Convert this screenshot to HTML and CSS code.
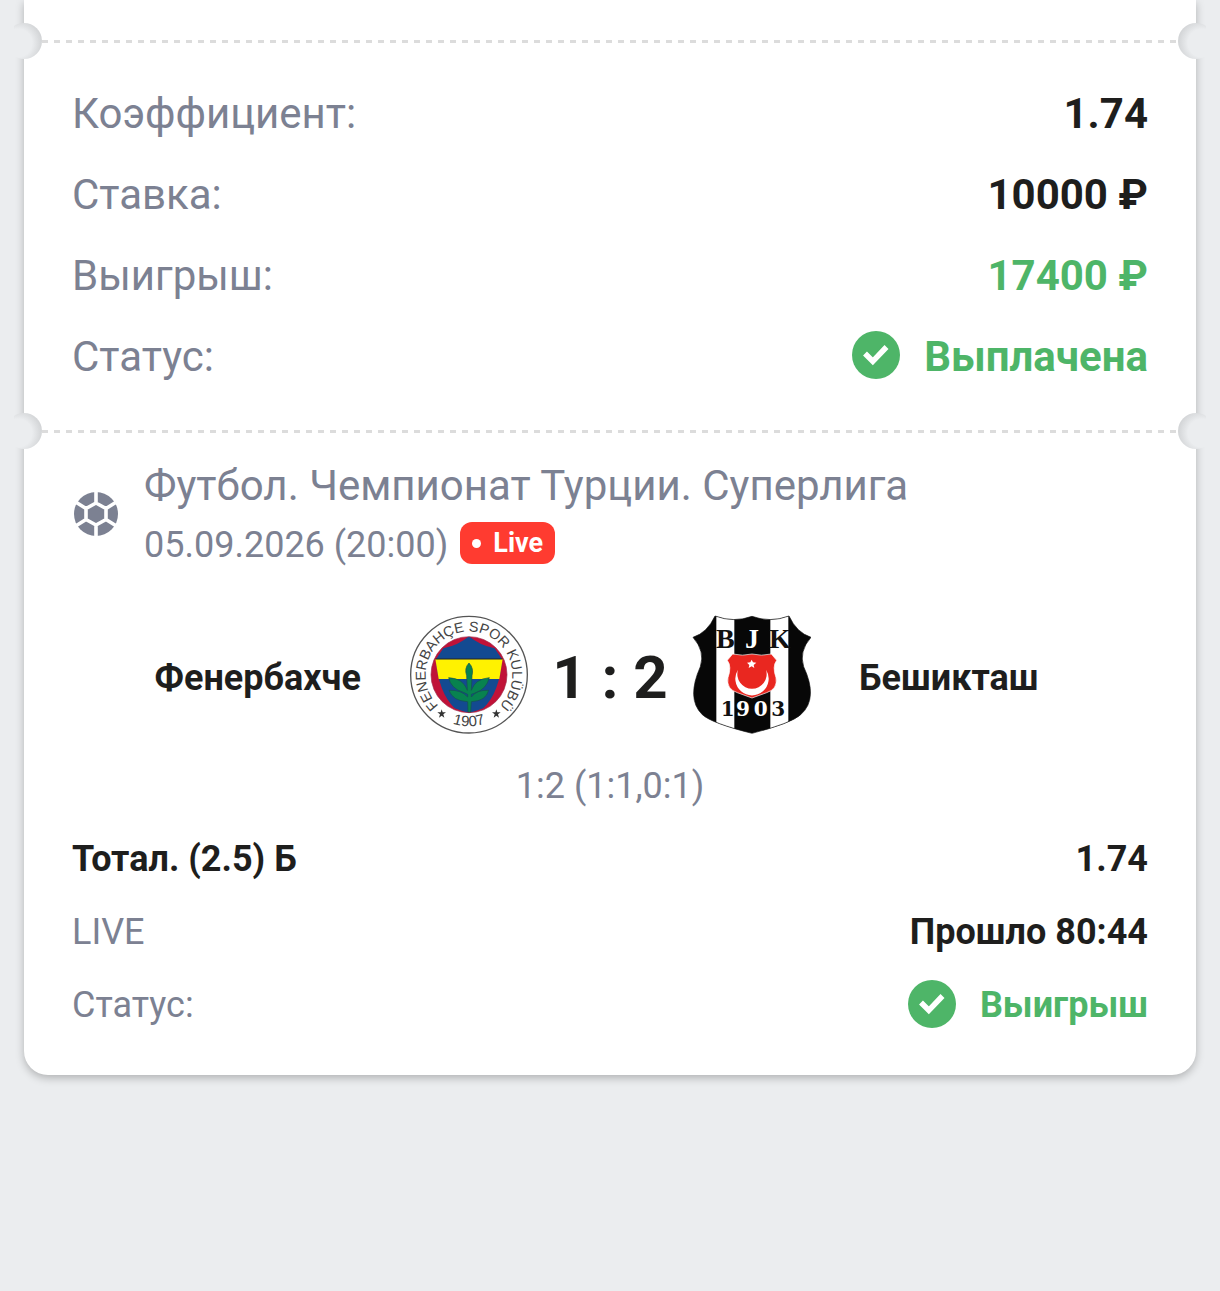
FILE: index.html
```html
<!DOCTYPE html>
<html lang="ru">
<head>
<meta charset="utf-8">
<meta name="viewport" content="width=device-width, initial-scale=1">
<title>Купон</title>
<link rel="stylesheet" href="styles.css">
</head>
<body>
<main class="ticket">
  <div class="divider"></div>
  <dl class="summary">
    <div class="row"><dt>Коэффициент:</dt><dd>1.74</dd></div>
    <div class="row"><dt>Ставка:</dt><dd>10000 ₽</dd></div>
    <div class="row"><dt>Выигрыш:</dt><dd class="win">17400 ₽</dd></div>
    <div class="row"><dt>Статус:</dt>
      <dd class="status win">
        <svg class="check" viewBox="0 0 48 48" aria-hidden="true"><circle cx="24" cy="24" r="24" fill="#4eb568"/><path d="M13 22.500l7.800 7.800L34.500 16" fill="none" stroke="#fff" stroke-width="5.500"/></svg>
        Выплачена
      </dd>
    </div>
  </dl>
  <div class="divider"></div>
  <section class="event">
    <header class="event-head">
      <svg class="ball" viewBox="0 0 48 48" aria-hidden="true">
        <circle cx="24" cy="24" r="22" fill="#7c8192"/>
        <path d="M24 13l10 5.500v11L24 35l-10-5.500v-11zM24 13V0M34 18.500L46 11M34 29.500L46 37M24 35v13M14 29.500L2 37M14 18.500L2 11" fill="none" stroke="#fff" stroke-width="3.600"/>
      </svg>
      <div class="event-info">
        <h1 class="league">Футбол. Чемпионат Турции. Суперлига</h1>
        <p class="when"><time datetime="2026-09-05T20:00">05.09.2026 (20:00)</time><span class="live">Live</span></p>
      </div>
    </header>
    <div class="match">
      <span class="team home">Фенербахче</span>
      <svg class="crest" viewBox="27 30 360 360" role="img" aria-label="Фенербахче">
        <defs>
          <path id="ring" d="M123 309A130 130 0 1 1 291 309"/>
          <path id="ring-low" d="M52 209A155 155 0 0 0 362 209"/>
          <clipPath id="disc"><circle cx="207" cy="209" r="114"/></clipPath>
        </defs>
        <circle cx="207" cy="209" r="175" fill="#fff" stroke="#555" stroke-width="4"/>
        <circle cx="207" cy="209" r="114" fill="#c01238"/>
        <g clip-path="url(#disc)">
          <path d="M207 94Q240 122 284 130L306 162Q300 260 250 310L207 325 164 310Q114 260 108 162L130 130Q174 122 207 94z" fill="#134a91"/>
          <path d="M106 162H308L298 222H116z" fill="#fff200"/>
          <path d="M106 162H308" stroke="#222" stroke-width="3"/>
        </g>
        <path d="M207 174Q222 190 216 212L214 256Q225 222 268 218 260 252 225 264L214 268V276Q230 254 266 256 258 288 214 290L212 322H204L203 290Q158 288 147 256 184 254 203 276V268L190 262Q152 250 146 218 190 220 202 256L200 212Q192 190 207 174z" fill="#08824f" stroke="#174f50" stroke-width="2"/>
        <circle cx="207" cy="209" r="114" fill="none" stroke="#9e2848" stroke-width="2"/>
        <text class="crest-name" fill="#444"><textPath href="#ring" startOffset="50%" text-anchor="middle">FENERBAHÇE SPOR KULÜBÜ</textPath></text>
        <text class="crest-year" fill="#444"><textPath href="#ring-low" startOffset="50%" text-anchor="middle">1907</textPath></text>
        <path d="M125 313l3 9 10 0-8 6 3 10-8-6-8 6 3-10-8-6h10z" fill="#333"/>
        <path d="M289 313l3 9 10 0-8 6 3 10-8-6-8 6 3-10-8-6h10z" fill="#333"/>
      </svg>
      <strong class="score">1 : 2</strong>
      <svg class="crest" viewBox="27 30 360 360" role="img" aria-label="Бешикташ">
        <defs><clipPath id="shield"><path d="M99 33Q156 54 210 34 264 54 321 33 344 83 387 97 350 139 365 185 410 282 356 329 328 355 210 385 90 355 61 329 12 282 55 185 70 139 33 97 76 83 99 33z"/></clipPath></defs>
        <g clip-path="url(#shield)">
          <path d="M20 20H400V400H20z" fill="#070707"/>
          <path d="M103 20H157V400H103zM265 20H319V400H265z" fill="#fff"/>
        </g>
        <path d="M99 33Q156 54 210 34 264 54 321 33 344 83 387 97 350 139 365 185 410 282 356 329 328 355 210 385 90 355 61 329 12 282 55 185 70 139 33 97 76 83 99 33z" fill="none" stroke="#111" stroke-width="2"/>
        <path d="M152 147Q182 154 210 147 238 154 268 147L284 166Q270 184 282 218 288 252 254 263L210 279 166 263Q132 252 138 218 150 184 136 166z" fill="#e92720" stroke="#fff" stroke-width="2"/>
        <path d="M168 194A50 50 0 1 0 252 194A44 44 0 1 1 168 194z" fill="#fff"/>
        <path d="M209 164l4 8 10 1-8 7 2 9-8-5-9 5 2-9-7-7 10-1z" fill="#fff"/>
        <g class="crest-bold" text-anchor="middle">
          <text x="130" y="129" fill="#111">B</text><text x="210" y="129" fill="#fff">J</text><text x="294" y="129" fill="#111">K</text>
        </g>
        <g class="crest-date" text-anchor="middle">
          <text x="137" y="334" fill="#111">1</text><text x="183" y="334" fill="#fff">9</text><text x="236" y="334" fill="#fff">0</text><text x="289" y="334" fill="#111">3</text>
        </g>
      </svg>
      <span class="team away">Бешикташ</span>
    </div>
    <p class="periods">1:2 (1:1,0:1)</p>
    <dl class="bet">
      <div class="row"><dt class="pick">Тотал. (2.5) Б</dt><dd>1.74</dd></div>
      <div class="row"><dt>LIVE</dt><dd>Прошло 80:44</dd></div>
      <div class="row"><dt>Статус:</dt>
        <dd class="status win">
          <svg class="check" viewBox="0 0 48 48" aria-hidden="true"><circle cx="24" cy="24" r="24" fill="#4eb568"/><path d="M13 22.500l7.800 7.800L34.500 16" fill="none" stroke="#fff" stroke-width="5.500"/></svg>
          Выигрыш
        </dd>
      </div>
    </dl>
  </section>
</main>
</body>
</html>
```
FILE: styles.css
```css
* { box-sizing: border-box; }

body {
  margin: 0;
  padding: 0 24px 48px;
  background: #ebedef;
  color: #1e1e1d;
  font-family: Roboto, "Liberation Sans", sans-serif;
}

h1, p, dl, dd { margin: 0; }

.ticket {
  padding-top: 23px;
  background: #fff;
  border-radius: 0 0 24px 24px;
  box-shadow: 0 3px 9px rgba(0, 0, 0, 0.25);
}

/* Perforation: dashed line between two round notches */
.divider {
  position: relative;
  height: 36px;
  background: repeating-linear-gradient(90deg, #dcdcdc 0 6px, transparent 6px 12px) 18px center / calc(100% - 36px) 3px no-repeat;
}

.divider::before,
.divider::after {
  content: "";
  position: absolute;
  top: 0;
  width: 36px;
  height: 36px;
  border-radius: 50%;
}

.divider::before {
  left: -18px;
  background: radial-gradient(circle at 12px 20px, #ebedef 14px, #d0d2d4 25px);
  clip-path: inset(0 0 0 8px);
}

.divider::after {
  right: -18px;
  background: radial-gradient(circle at 24px 20px, #ebedef 14px, #d0d2d4 25px);
  clip-path: inset(0 8px 0 0);
}

.row {
  display: flex;
  justify-content: space-between;
  align-items: center;
}

dt { color: #7c8192; }
dd { font-weight: 700; }

.summary {
  display: flex;
  flex-direction: column;
  gap: 32px;
  padding: 30px 48px 32px;
  font-size: 42px;
  line-height: 49px;
}

.status {
  display: flex;
  align-items: center;
  gap: 24px;
}

.win { color: #4eb568; }

/* The tick is raised slightly so it centres on the capitals */
.check {
  width: 48px;
  height: 48px;
  margin: -6px 0 -2px;
}

.bet .check { margin: -8px 0 -4px; }

.event { padding: 12px 48px 49px; }

.event-head {
  display: flex;
  align-items: center;
  gap: 24px;
}

.ball {
  flex: none;
  width: 48px;
  height: 48px;
}

.event-info { color: #7c8192; }

.league {
  font-size: 42px;
  line-height: 49px;
  font-weight: 400;
}

.when {
  display: flex;
  align-items: flex-end;
  gap: 12px;
  margin-top: 8px;
  font-size: 36px;
  line-height: 42px;
}

.when time { padding-top: 6px; }

.live {
  display: flex;
  align-items: center;
  gap: 12px;
  margin-bottom: 2px;
  padding: 0 12px;
  border-radius: 12px;
  background: #ff3b30;
  color: #fff;
  font-size: 27px;
  font-weight: 700;
}

.live::before {
  content: "";
  width: 9px;
  height: 9px;
  border-radius: 50%;
  background: #fff;
}

.match {
  display: grid;
  grid-template-columns: 1fr 120px 162px 120px 1fr;
  align-items: center;
  margin-top: 49px;
}

.team {
  padding-top: 6px;
  font-size: 36px;
  line-height: 41px;
  font-weight: 700;
}

.home {
  padding-right: 48px;
  text-align: right;
}

.away { padding-left: 48px; }

.crest {
  width: 120px;
  height: 120px;
}

.crest-name { font: 43px "Liberation Sans", sans-serif; }
.crest-year { font: 45px "Liberation Sans", sans-serif; }
.crest-bold { font: bold 84px "Liberation Serif", serif; }
.crest-date { font: bold 60px "DejaVu Serif", serif; }

.score {
  padding-top: 6px;
  font-size: 60px;
  line-height: 70px;
  text-align: center;
}

.periods {
  margin: 31px 0 32px;
  color: #7c8192;
  font-size: 36px;
  line-height: 41px;
  text-align: center;
}

.bet {
  display: flex;
  flex-direction: column;
  gap: 32px;
  font-size: 36px;
  line-height: 41px;
}

.pick {
  color: #1e1e1d;
  font-weight: 700;
}
```
